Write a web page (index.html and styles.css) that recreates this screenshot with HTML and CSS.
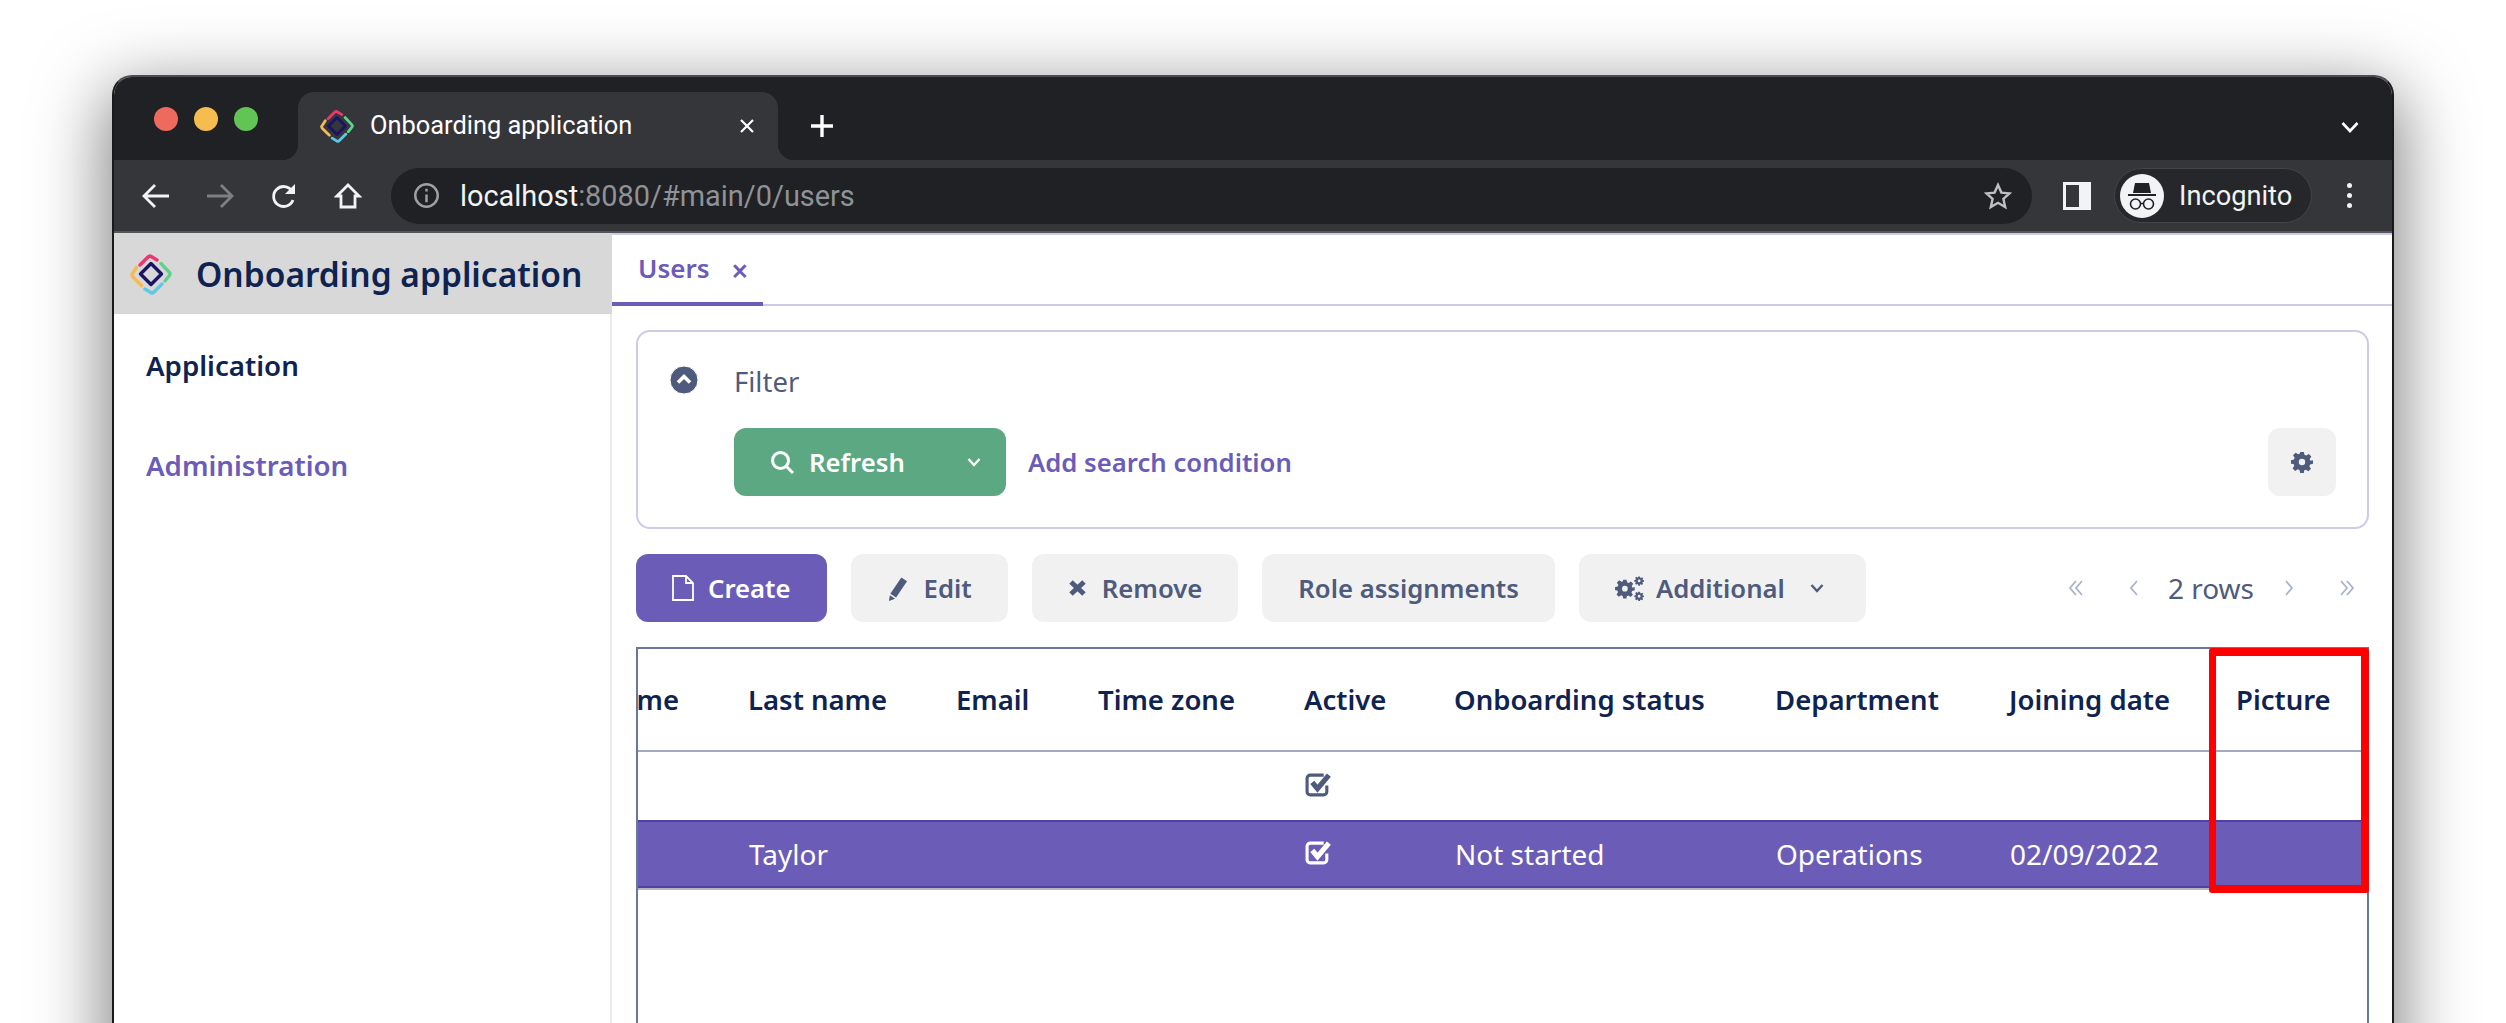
FILE: index.html
```html
<!DOCTYPE html>
<html lang="en">
<head>
  <meta charset="UTF-8">
  <title>Onboarding application</title>
  <link rel="stylesheet" href="styles.css">
</head>
<body>
  <div class="window">
    <!-- browser tabs -->
    <div class="tabstrip">
      <div class="lights">
        <span class="light red"></span>
        <span class="light yellow"></span>
        <span class="light green"></span>
      </div>
      <div class="browser-tab">
        <svg class="logo-small" viewBox="-21 -21 42 42">
          <use href="#logo"></use>
        </svg>
        <span class="browser-tab-title">Onboarding application</span>
        <svg class="browser-tab-close" viewBox="0 0 16 16"><path d="M2 2l12 12M14 2L2 14"/></svg>
      </div>
      <svg class="new-tab" viewBox="0 0 24 24"><path d="M12 1v22M1 12h22"/></svg>
      <svg class="tab-menu" viewBox="0 0 18 12"><path d="M1.500 2L9 10l7.500-8"/></svg>
    </div>

    <!-- browser toolbar -->
    <div class="toolbar">
      <svg class="nav-icon nav-back" viewBox="0 0 28 28"><path d="M27 14H2M13 3L2 14l11 11"/></svg>
      <svg class="nav-icon nav-forward" viewBox="0 0 28 28"><path d="M1 14h25M15 3l11 11-11 11"/></svg>
      <svg class="nav-icon nav-reload" viewBox="0 0 28 28"><path d="M23 18a10 10 0 1 1-1-9"/><path class="solid" d="M25 2v10H15z"/></svg>
      <svg class="nav-icon nav-home" viewBox="0 0 28 28"><path d="M14 3L3 14h4v11h14V14h4z"/></svg>
      <div class="omnibox">
        <svg class="info-icon" viewBox="0 0 24 24">
          <circle cx="12" cy="12" r="10"/>
          <path d="M12 11v7M12 6v2.500"/>
        </svg>
        <span class="url"><span class="url-host">localhost</span>:8080/#main/0/users</span>
        <svg class="star-icon" viewBox="0 0 28 28"><path d="M14 3l3.400 7.600 8.100.8-6.100 5.500 1.800 8.100-7.200-4.200L6.800 25l1.800-8.100L2.500 11.400l8.100-.8z"/></svg>
      </div>
      <svg class="panel-icon" viewBox="0 0 28 28"><path fill-rule="evenodd" d="M0 0h28v28H0zM3 3v22h13V3z"/></svg>
      <div class="profile">
        <span class="avatar">
          <svg viewBox="0 0 44 44">
            <path class="hat" d="M15 9h14l2 10H13z"/>
            <path class="brim" d="M8 21h28"/>
            <circle cx="15.500" cy="30" r="5"/>
            <circle cx="28.500" cy="30" r="5"/>
            <path class="brim-thin" d="M20.500 29.500h3"/>
          </svg>
        </span>
        <span class="profile-name">Incognito</span>
      </div>
      <div class="kebab"><span></span><span></span><span></span></div>
    </div>

    <!-- application -->
    <div class="app">
      <aside class="sidebar">
        <div class="app-header">
          <svg class="logo" viewBox="-21 -21 42 42"><use href="#logo"></use></svg>
          <span class="app-title">Onboarding application</span>
        </div>
        <nav class="side-menu">
          <a class="side-item">Application</a>
          <a class="side-item side-item-active">Administration</a>
        </nav>
      </aside>

      <main class="main">
        <div class="view-tabs">
          <div class="view-tab">Users <span class="view-tab-close">×</span></div>
        </div>

        <div class="content">
          <section class="filter">
            <div class="filter-toggle">
              <svg viewBox="0 0 28 28"><circle cx="14" cy="14" r="14"/><path d="M8 16.500l6-6 6 6"/></svg>
            </div>
            <div class="filter-body">
              <div class="filter-label">Filter</div>
              <div class="filter-row">
                <button class="btn btn-green">
                  <svg class="search-icon" viewBox="0 0 24 24"><circle cx="10.500" cy="10.500" r="8"/><path d="M16.500 16.500L23 23"/></svg>
                  <span>Refresh</span>
                  <svg class="chev" viewBox="0 0 14 10"><path d="M1.500 2L7 8l5.500-6"/></svg>
                </button>
                <a class="add-condition">Add search condition</a>
                <button class="btn btn-settings">
                  <svg class="gear" viewBox="0 0 24 24"><use href="#gear"></use></svg>
                </button>
              </div>
            </div>
          </section>

          <div class="actions">
            <button class="btn btn-primary">
              <svg class="file-icon" viewBox="0 0 22 26"><path d="M1 1h13l7 7v17H1zM14 1v7h7"/></svg>
              <span>Create</span>
            </button>
            <button class="btn">
              <svg class="pencil-icon" viewBox="0 0 22 26"><path d="M15 1.500l6 4-11.500 17-6-4zM3 20l5.500 3.700L2 26z"/></svg>
              <span>Edit</span>
            </button>
            <button class="btn">
              <svg class="times-icon" viewBox="0 0 19 18"><path d="M3 3l13 12M16 3L3 15"/></svg>
              <span>Remove</span>
            </button>
            <button class="btn">Role assignments</button>
            <button class="btn">
              <svg class="gears-icon" viewBox="0 0 30 26">
                <use href="#gear" transform="translate(0 3) scale(.85)"></use>
                <use href="#gear" transform="translate(20 0) scale(.42)"></use>
                <use href="#gear" transform="translate(20 16) scale(.42)"></use>
              </svg>
              <span>Additional</span>
              <svg class="chev chev-additional" viewBox="0 0 14 10"><path d="M1.500 2L7 8l5.500-6"/></svg>
            </button>
            <div class="pager">
              <svg class="pager-icon" viewBox="0 0 16 18"><path d="M8 2L2 9l6 7M14 2L8 9l6 7"/></svg>
              <svg class="pager-icon pager-gap" viewBox="0 0 16 18"><path d="M11 2L5 9l6 7"/></svg>
              <span class="pager-count">2 rows</span>
              <svg class="pager-icon" viewBox="0 0 16 18"><path d="M5 2l6 7-6 7"/></svg>
              <svg class="pager-icon pager-gap" viewBox="0 0 16 18"><path d="M2 2l6 7-6 7M8 2l6 7-6 7"/></svg>
            </div>
          </div>

          <div class="grid">
            <div class="row row-head">
              <div class="cell cell-clip">me</div>
              <div class="cell">Last name</div>
              <div class="cell">Email</div>
              <div class="cell">Time zone</div>
              <div class="cell">Active</div>
              <div class="cell">Onboarding status</div>
              <div class="cell">Department</div>
              <div class="cell">Joining date</div>
              <div class="cell">Picture</div>
            </div>
            <div class="row row-body">
              <div class="cell"></div>
              <div class="cell"></div>
              <div class="cell"></div>
              <div class="cell"></div>
              <div class="cell cell-check">
                <svg class="check-icon" viewBox="0 0 26 24"><path class="check-box" d="M21 13v6a3 3 0 0 1-3 3H5a3 3 0 0 1-3-3V6a3 3 0 0 1 3-3h13"/><path class="check-mark" d="M7 10l5 6 11-13"/></svg>
              </div>
              <div class="cell"></div>
              <div class="cell"></div>
              <div class="cell"></div>
              <div class="cell"></div>
            </div>
            <div class="row row-body row-selected">
              <div class="cell"></div>
              <div class="cell">Taylor</div>
              <div class="cell"></div>
              <div class="cell"></div>
              <div class="cell cell-check">
                <svg class="check-icon" viewBox="0 0 26 24"><path class="check-box" d="M21 13v6a3 3 0 0 1-3 3H5a3 3 0 0 1-3-3V6a3 3 0 0 1 3-3h13"/><path class="check-mark" d="M7 10l5 6 11-13"/></svg>
              </div>
              <div class="cell">Not started</div>
              <div class="cell">Operations</div>
              <div class="cell">02/09/2022</div>
              <div class="cell"></div>
            </div>
            <div class="highlight"></div>
          </div>
        </div>
      </main>
    </div>
  </div>

  <svg class="defs" width="0" height="0">
    <defs>
      <g id="logo" fill="none" stroke-width="3.400" stroke-linecap="round" stroke-linejoin="round">
        <path stroke="#e8386d" d="M-11 -9L-3 -17Q-1 -19 1 -17L6 -14"/>
        <path stroke="#5fd38d" d="M10 -10.500L18 -2Q20 0 18 2L14 7"/>
        <path stroke="#5cc9e6" d="M11 10L3 18Q1 20 -1 18L-6 15"/>
        <path stroke="#f5b955" d="M-9.500 11.500L-18 3Q-20 1 -18 -1L-14.500 -6.500"/>
        <path stroke="#1b1464" d="M0 -10.500L10.500 0L0 10.500L-10.500 0Z"/>
      </g>
      <g id="gear">
        <path fill-rule="evenodd" d="M10 1h4l.7 3.200 1.900.8 2.800-1.800 2.800 2.800-1.800 2.800.8 1.900L24 10v4l-3.200.7-.8 1.900 1.800 2.800-2.800 2.800-2.800-1.800-1.900.8L14 24h-4l-.7-3.200-1.900-.8-2.800 1.800-2.800-2.800 1.800-2.800-.8-1.900L0 14v-4l3.200-.7.8-1.900L2.200 4.600 5 1.800l2.800 1.800 1.900-.8zM12 8.500a3.500 3.500 0 1 0 0 7 3.500 3.500 0 0 0 0-7z"/>
      </g>
    </defs>
  </svg>
</body>
</html>
```

FILE: styles.css
```css
html, body {
  height: 100%;
  overflow: hidden;
}
body {
  margin: 0;
  padding: 75px 112px 0;
  box-sizing: border-box;
  background-color: #fff;
  font-family: "Noto Sans", sans-serif;
}
.defs {
  position: absolute;
}
svg {
  display: block;
  flex: none;
}

/* window */
.window {
  height: 1000px;
  box-sizing: border-box;
  border: 2px solid #1a1a1a;
  border-top-color: #4c4d50;
  border-radius: 20px 20px 0 0;
  background-color: #fff;
  box-shadow: 0 20px 70px 6px rgba(0, 0, 0, 0.5);
  overflow: hidden;
}

/* browser tabs */
.tabstrip {
  display: flex;
  align-items: flex-end;
  height: 83px;
  background-color: #202124;
  font-family: Roboto, sans-serif;
  color: #fff;
}
.lights {
  display: flex;
  gap: 16px;
  align-self: flex-start;
  margin: 30px 0 0 40px;
  width: 144px;
}
.light {
  width: 24px;
  height: 24px;
  border-radius: 50%;
}
.red { background-color: #ee6a5f; }
.yellow { background-color: #f5bd4f; }
.green { background-color: #61c454; }
.browser-tab {
  position: relative;
  display: flex;
  align-items: center;
  width: 480px;
  height: 68px;
  box-sizing: border-box;
  padding: 0 22px;
  background-color: #35363a;
  border-radius: 16px 16px 0 0;
}
.browser-tab::before,
.browser-tab::after {
  content: "";
  position: absolute;
  bottom: 0;
  width: 16px;
  height: 16px;
}
.browser-tab::before {
  left: -16px;
  background: radial-gradient(circle at 0 0, #202124 16px, #35363a 16.5px);
}
.browser-tab::after {
  right: -16px;
  background: radial-gradient(circle at 100% 0, #202124 16px, #35363a 16.5px);
}
.logo-small {
  width: 34px;
  height: 34px;
  margin-right: 16px;
}
.browser-tab-title {
  font-size: 25.4px;
  white-space: nowrap;
  flex: 1;
  margin-top: -2px;
}
.browser-tab-close {
  width: 16px;
  height: 16px;
  margin-right: 1px;
  fill: none;
  stroke: #fff;
  stroke-width: 2.2;
}
.new-tab {
  width: 24px;
  height: 24px;
  margin: 0 0 22px 32px;
  fill: none;
  stroke: #fff;
  stroke-width: 3.4;
}
.tab-menu {
  width: 18px;
  height: 12px;
  margin: 0 33px 27px auto;
  fill: none;
  stroke: #fff;
  stroke-width: 2.6;
}

/* browser toolbar */
.toolbar {
  display: flex;
  align-items: center;
  height: 73px;
  padding-right: 34px;
  background-color: #35363a;
  border-bottom: 2px solid #55565a;
  box-sizing: border-box;
  font-family: Roboto, sans-serif;
}
.nav-icon {
  width: 28px;
  height: 28px;
  fill: none;
  stroke: #f1f3f4;
  stroke-width: 2.8;
}
.nav-back { margin-left: 28px; }
.nav-forward { margin-left: 36px; stroke: #7d7f83; }
.nav-reload { margin-left: 36px; }
.nav-reload .solid { fill: #f1f3f4; stroke: none; }
.nav-home { margin-left: 36px; }
.omnibox {
  display: flex;
  align-items: center;
  width: 1641px;
  height: 56px;
  margin-left: 29px;
  box-sizing: border-box;
  padding: 0 20px 0 22px;
  background-color: #202124;
  border-radius: 28px;
}
.info-icon {
  width: 27px;
  height: 27px;
  fill: none;
  stroke: #9aa0a6;
  stroke-width: 2.2;
}
.url {
  flex: 1;
  margin-left: 20px;
  font-size: 28.9px;
  color: #8f9296;
  white-space: nowrap;
}
.url-host { color: #f1f3f4; }
.star-icon {
  width: 28px;
  height: 28px;
  fill: none;
  stroke: #bdc1c6;
  stroke-width: 2.4;
}
.panel-icon {
  width: 28px;
  height: 28px;
  margin-left: 31px;
  fill: #f1f3f4;
}
.profile {
  display: flex;
  align-items: center;
  width: 198px;
  height: 55px;
  margin-left: 23px;
  box-sizing: border-box;
  padding-left: 5px;
  background-color: #26272a;
  border: 1px solid #43444a;
  border-radius: 28px;
}
.avatar {
  width: 44px;
  height: 44px;
  border-radius: 50%;
  background-color: #f1f3f4;
}
.avatar circle {
  fill: none;
  stroke: #202124;
  stroke-width: 1.6;
}
.avatar .hat { fill: #202124; }
.avatar .brim { fill: none; stroke: #202124; stroke-width: 2; }
.avatar .brim-thin { fill: none; stroke: #202124; stroke-width: 1.4; }
.profile-name {
  margin-left: 15px;
  font-size: 27.2px;
  color: #f1f3f4;
}
.kebab {
  display: flex;
  flex-direction: column;
  gap: 5px;
  margin-left: 35px;
}
.kebab span {
  width: 5px;
  height: 5px;
  border-radius: 50%;
  background-color: #f1f3f4;
}

/* application */
.app {
  display: flex;
  height: 900px;
}
.sidebar {
  width: 498px;
  flex: none;
  box-sizing: border-box;
  border-right: 2px solid #ececec;
}
.app-header {
  display: flex;
  align-items: center;
  height: 81px;
  box-sizing: border-box;
  padding-left: 16px;
  margin-right: -2px;
  background-color: #d8d8d8;
}
.logo {
  width: 42px;
  height: 42px;
}
.app-title {
  margin-left: 24px;
  font-size: 33.5px;
  font-weight: 600;
  color: #0f2350;
  white-space: nowrap;
}
.side-menu {
  display: flex;
  flex-direction: column;
  gap: 62px;
  padding: 32px 0 0 32px;
}
.side-item {
  font-size: 27.7px;
  line-height: 38px;
  font-weight: 600;
  color: #0f2350;
}
.side-item-active {
  color: #6b5cb8;
}
.main {
  flex: 1;
  min-width: 0;
}
.view-tabs {
  display: flex;
  height: 73px;
  box-sizing: border-box;
  border-top: 2px solid #cfcae8;
  border-bottom: 2px solid #cfcae8;
}
.view-tab {
  width: 151px;
  height: 71px;
  box-sizing: border-box;
  padding: 15px 0 0 26px;
  font-size: 26px;
  font-weight: 600;
  color: #6b5cb8;
  border-bottom: 4px solid #6b5cb8;
  white-space: nowrap;
}
.view-tab-close {
  margin-left: 15px;
  font-size: 30px;
  line-height: 26px;
  vertical-align: -4px;
}
.content {
  padding: 24px 23px 0 24px;
}

/* filter */
.filter {
  display: flex;
  height: 199px;
  box-sizing: border-box;
  border: 2px solid #cfcae8;
  border-radius: 14px;
}
.filter-toggle {
  width: 96px;
  flex: none;
  padding: 34px 0 0 32px;
  box-sizing: border-box;
}
.filter-toggle svg {
  width: 28px;
  height: 28px;
  fill: #4f5b7c;
  stroke: #fff;
}
.filter-toggle path {
  fill: none;
  stroke-width: 3.6;
}
.filter-body {
  flex: 1;
  padding: 30px 31px 0 0;
}
.filter-label {
  height: 40px;
  line-height: 40px;
  font-size: 27.5px;
  color: #4f5b7c;
}
.filter-row {
  display: flex;
  align-items: center;
  margin-top: 26px;
}
.btn {
  display: flex;
  align-items: center;
  height: 68px;
  box-sizing: border-box;
  padding: 0 36px;
  border: none;
  border-radius: 12px;
  background-color: #f1f1f1;
  color: #4f5b7c;
  font-family: "Noto Sans", sans-serif;
  font-size: 25.7px;
  font-weight: 600;
  white-space: nowrap;
}
.btn-green {
  width: 272px;
  padding: 0 0 0 36px;
  background-color: #5ba882;
  color: #fff;
}
.btn-primary {
  background-color: #6b5cb8;
  color: #fff;
}
.btn-settings {
  width: 68px;
  margin-left: auto;
  padding: 0;
  justify-content: center;
  color: #4f5b7c;
}
.search-icon {
  width: 24px;
  height: 24px;
  margin-right: 15px;
  fill: none;
  stroke: #fff;
  stroke-width: 3;
}
.chev {
  width: 14px;
  height: 10px;
  margin-left: 62px;
  fill: none;
  stroke: #fff;
  stroke-width: 2.4;
}
.chev-additional {
  margin: 0 6px 0 25px;
  stroke: #4f5b7c;
}
.gear {
  width: 22px;
  height: 22px;
  fill: currentColor;
}
.add-condition {
  margin-left: 22px;
  font-size: 25.7px;
  font-weight: 600;
  color: #6b5cb8;
  white-space: nowrap;
}

/* toolbar buttons */
.actions {
  display: flex;
  align-items: center;
  gap: 24px;
  margin-top: 25px;
}
.file-icon {
  width: 22px;
  height: 26px;
  margin-right: 14px;
  fill: none;
  stroke: #fff;
  stroke-width: 1.8;
}
.pencil-icon {
  width: 21px;
  height: 25px;
  margin-right: 16px;
  fill: #4f5b7c;
}
.times-icon {
  width: 19px;
  height: 18px;
  margin-right: 15px;
  fill: none;
  stroke: #4f5b7c;
  stroke-width: 5;
}
.gears-icon {
  width: 29px;
  height: 25px;
  margin-right: 12px;
  fill: #4f5b7c;
}
.pager {
  display: flex;
  align-items: center;
  margin-left: auto;
  margin-right: 14px;
}
.pager-icon {
  width: 16px;
  height: 18px;
  fill: none;
  stroke: #a9b2cc;
  stroke-width: 1.8;
}
.pager-gap {
  margin-left: 42px;
}
.pager-count {
  margin: 0 27px 0 26px;
  font-size: 28px;
  color: #4f5b7c;
}

/* table */
.grid {
  position: relative;
  margin-top: 25px;
  height: 400px;
  box-sizing: border-box;
  border: 2px solid #69779b;
  border-bottom: none;
}
.row {
  display: grid;
  grid-template-columns: 83px 208px 142px 206px 150px 321px 234px 227px 158px;
  align-items: center;
}
.cell {
  padding-left: 27px;
  font-size: 28px;
  white-space: nowrap;
  min-width: 0;
}
.row-head {
  height: 103px;
  border-bottom: 2px solid #a0a9c0;
  box-sizing: border-box;
  color: #0f2350;
}
.row-head .cell {
  font-size: 27.5px;
  font-weight: 600;
}
.row-head .cell-clip {
  display: flex;
  justify-content: flex-end;
  padding: 0 42px 0 0;
}
.row-body {
  height: 68px;
}
.row-selected {
  box-sizing: border-box;
  background-color: #6b5cb8;
  border-top: 2px solid #5240a8;
  border-bottom: 2px solid #5240a8;
  box-shadow: 0 2px 0 #b5b5bd;
  color: #fff;
}
.row-selected .cell {
  padding-left: 28px;
}
.row-body .cell-check {
  padding: 0 0 3px 28px;
}
.row-selected .cell-check {
  padding-bottom: 4px;
}
.check-icon {
  width: 27px;
  height: 25px;
  fill: none;
  stroke: #4f5b7c;
}
.check-box {
  stroke-width: 3;
}
.check-mark {
  stroke-width: 5;
}
.row-selected .check-icon {
  stroke: #fff;
}
.highlight {
  position: absolute;
  top: -1px;
  right: -2px;
  width: 160px;
  height: 245px;
  box-sizing: border-box;
  border: 8px solid #f00;
  border-left-width: 7px;
  border-radius: 3px;
}
```
